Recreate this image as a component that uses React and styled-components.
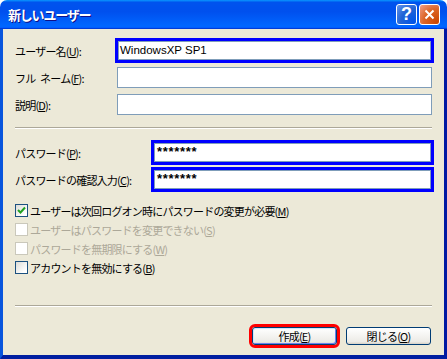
import React from 'react';
import styled, { createGlobalStyle } from 'styled-components';

const Colors = {
  face: '#ece9d8',
  field: '#7f9db9',
  mark: '#0000ff',
  red: '#ff0000',
  grayText: '#aca899',
  text: '#000000',
};

const GlobalStyle = createGlobalStyle`
  html, body {
    margin: 0;
    padding: 0;
    background: #ffffff;
  }
  body {
    font-family: "Noto Sans CJK JP", "Liberation Sans", sans-serif;
    font-size: 12px;
  }
`;

const Window = styled.div`
  width: 447px;
  height: 359px;
  display: flex;
  flex-direction: column;
  overflow: hidden;
  border-radius: 7px 7px 0 0;
`;

const TitleBar = styled.div`
  height: 29px;
  flex: none;
  display: flex;
  align-items: center;
  padding: 0 7px 0 8px;
  box-sizing: border-box;
  background: linear-gradient(180deg, #0997ff, #0053ee 8%, #0050ee 40%, #0066ff 88%, #0066ff 93%, #005bff 95%, #003dd7 96%, #003dd7);
`;

const Title = styled.span`
  color: #ffffff;
  font-weight: bold;
  font-size: 13px;
  letter-spacing: -1.2px;
  text-shadow: 1px 1px #0f1089;
`;

const Controls = styled.div`
  margin-left: auto;
  display: flex;
  gap: 2px;
`;

const CtrlButton = styled.div`
  width: 21px;
  height: 21px;
  box-sizing: border-box;
  border: 1px solid #ffffff;
  border-radius: 3px;
  display: flex;
  align-items: center;
  justify-content: center;
  color: #ffffff;
  font-family: "Liberation Sans", sans-serif;
  font-weight: bold;
  font-size: 18px;
  background: ${p => p.$close
    ? 'radial-gradient(circle at 90% 90%, #cc4600 0%, #dc6527 55%, #f1a08a 100%)'
    : 'radial-gradient(circle at 90% 90%, #0054e9 0%, #2263d5 55%, #6696eb 100%)'};
`;

const Frame = styled.div`
  flex: 1;
  display: flex;
  flex-direction: column;
  background: ${Colors.face};
  border-left: 3px solid #0855dd;
  border-right: 3px solid #0019a3;
  border-bottom: 4px solid #001ea0;
  padding: 11px 12px 10px 12px;
`;

const FieldGrid = styled.div`
  display: grid;
  grid-template-columns: ${p => p.$labelWidth}px 1fr;
  grid-auto-rows: 21px;
  row-gap: 6px;
  align-items: center;
`;

const Label = styled.span`
  color: inherit;
  white-space: pre;
  letter-spacing: -0.8px;
  font-size: 11px;
`;

const TextBox = styled.div`
  height: 21px;
  box-sizing: border-box;
  background: #ffffff;
  border: 1px solid ${Colors.field};
  padding-left: 2px;
  font-family: "Liberation Sans", sans-serif;
  font-size: 11.5px;
  line-height: 19px;
  color: #000000;
  outline: ${p => (p.$marked ? `3px solid ${Colors.mark}` : 'none')};
  outline-offset: -1px;
  box-shadow: ${p => (p.$marked ? `inset 0 0 0 1px ${Colors.field}` : 'none')};
`;

const Secret = styled.span`
  font-weight: bold;
  font-size: 13px;
  letter-spacing: 0.7px;
  line-height: 17px;
  padding-left: 1px;
`;

const Separator = styled.div`
  height: 0;
  border-top: 1px solid #aca899;
  border-bottom: 1px solid #ffffff;
  margin: ${p => p.$auto ? 'auto 0 0' : '12px 0 13px'};
`;

const CheckList = styled.div`
  margin-top: 14px;
  display: flex;
  flex-direction: column;
  gap: 6px;
`;

const CheckRow = styled.div`
  display: flex;
  align-items: center;
  height: 13px;
  gap: 2px;
  color: ${p => (p.$disabled ? Colors.grayText : Colors.text)};
`;

const Box = styled.div`
  width: 13px;
  height: 13px;
  box-sizing: border-box;
  flex: none;
  border: 1px solid ${p => (p.$disabled ? '#cac8bb' : '#1c5180')};
  background: ${p => (p.$disabled ? '#ffffff' : 'linear-gradient(135deg, #dcdcd7, #ffffff 80%)')};
  display: flex;
  align-items: center;
  justify-content: center;
`;

const Footer = styled.div`
  margin-top: 20px;
  display: flex;
  justify-content: flex-end;
  gap: 9px;
  padding-right: 1px;
`;

const PushButton = styled.button`
  width: 85px;
  height: 18px;
  padding: 0;
  border: 1px solid #003c74;
  border-radius: 3px;
  font-family: "Noto Sans CJK JP", sans-serif;
  font-size: 11px;
  letter-spacing: -0.8px;
  line-height: 16px;
  color: #000000;
  background: linear-gradient(180deg, #ffffff, #ecebe6 86%, #d6d0c5);
  box-shadow: ${p => (p.$default ? 'inset -1px -1px #6982ee, inset 1px 1px #cee7ff' : 'none')};
  outline: ${p => (p.$marked ? `3px solid ${Colors.red}` : 'none')};
  outline-offset: 0;
`;

const CheckMark = () => (
  <svg width="9" height="9" viewBox="0 0 9 9">
    <path d="M1 4 L3.5 6.5 L8 1.5" fill="none" stroke="#21a121" strokeWidth="2" />
  </svg>
);

const CloseGlyph = () => (
  <svg width="11" height="11" viewBox="0 0 11 11">
    <path d="M1.5 1.5 L9.5 9.5 M9.5 1.5 L1.5 9.5" stroke="#ffffff" strokeWidth="2" />
  </svg>
);

const Key = ({ k }) => (
  <>(<u>{k}</u>)</>
);

const checks = [
  { text: 'ユーザーは次回ログオン時にパスワードの変更が必要', k: 'M', checked: true },
  { text: 'ユーザーはパスワードを変更できない', k: 'S', disabled: true },
  { text: 'パスワードを無期限にする', k: 'W', disabled: true },
  { text: 'アカウントを無効にする', k: 'B' },
];

export default function App() {
  return (
    <>
      <GlobalStyle />
      <Window>
        <TitleBar>
          <Title>新しいユーザー</Title>
          <Controls>
            <CtrlButton>?</CtrlButton>
            <CtrlButton $close><CloseGlyph /></CtrlButton>
          </Controls>
        </TitleBar>
        <Frame>
          <FieldGrid $labelWidth={102}>
            <Label>ユーザー名<Key k="U" />:</Label>
            <TextBox $marked>WindowsXP SP1</TextBox>
            <Label>フル{'\u2002'}ネーム<Key k="F" />:</Label>
            <TextBox />
            <Label>説明<Key k="D" />:</Label>
            <TextBox />
          </FieldGrid>
          <Separator />
          <FieldGrid $labelWidth={138}>
            <Label>パスワード<Key k="P" />:</Label>
            <TextBox $marked><Secret>*******</Secret></TextBox>
            <Label>パスワードの確認入力<Key k="C" />:</Label>
            <TextBox $marked><Secret>*******</Secret></TextBox>
          </FieldGrid>
          <CheckList>
            {checks.map(c => (
              <CheckRow key={c.k} $disabled={c.disabled}>
                <Box $disabled={c.disabled}>{c.checked && <CheckMark />}</Box>
                <Label>{c.text}<Key k={c.k} /></Label>
              </CheckRow>
            ))}
          </CheckList>
          <Separator $auto />
          <Footer>
            <PushButton $default $marked>作成<Key k="E" /></PushButton>
            <PushButton>閉じる<Key k="O" /></PushButton>
          </Footer>
        </Frame>
      </Window>
    </>
  );
}
